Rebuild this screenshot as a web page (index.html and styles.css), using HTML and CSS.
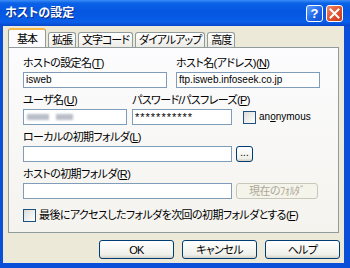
FILE: index.html
```html
<!DOCTYPE html>
<html lang="ja">
<head>
  <meta charset="UTF-8">
  <title>ホストの設定</title>
  <link rel="stylesheet" href="styles.css">
</head>
<body>

  <div class="window">
    <div class="titlebar">
      <span class="title">ホストの設定</span>
      <div class="caption-buttons">
        <span class="cap-btn cap-help">?</span>
        <span class="cap-btn cap-close">
          <svg width="11" height="11" viewBox="0 0 11 11"><path d="M1.5 1.5 L9.5 9.5 M9.5 1.5 L1.5 9.5" stroke="#fff" stroke-width="2" stroke-linecap="square"/></svg>
        </span>
      </div>
    </div>

    <div class="client">
      <div class="tabs">
        <div class="tab active">基本</div>
        <div class="tab">拡張</div>
        <div class="tab">文字コード</div>
        <div class="tab">ダイアルアップ</div>
        <div class="tab">高度</div>
      </div>

      <div class="panel">
        <div class="row">
          <div class="field w-144">
            <div class="label">ホストの設定名(<u>T</u>)</div>
            <div class="edit">isweb</div>
          </div>
          <div class="field w-144">
            <div class="label">ホスト名(アドレス)(<u>N</u>)</div>
            <div class="edit">ftp.isweb.infoseek.co.jp</div>
          </div>
        </div>

        <div class="row row-user">
          <div class="field w-104">
            <div class="label">ユーザ名(<u>U</u>)</div>
            <div class="edit">
              <span class="smudge smudge-a"></span>
              <span class="smudge smudge-b"></span>
            </div>
          </div>
          <div class="field w-100">
            <div class="label">パスワード/パスフレーズ(<u>P</u>)</div>
            <div class="edit password">***********</div>
          </div>
          <label class="check anon">
            <span class="box"></span>
            <span class="latin">an<u>o</u>nymous</span>
          </label>
        </div>

        <div class="field">
          <div class="label">ローカルの初期フォルダ(<u>L</u>)</div>
          <div class="line">
            <div class="edit w-209"></div>
            <span class="btn btn-dots">...</span>
          </div>
        </div>

        <div class="field">
          <div class="label">ホストの初期フォルダ(<u>R</u>)</div>
          <div class="line">
            <div class="edit w-209"></div>
            <span class="btn btn-current">現在のﾌｫﾙﾀﾞ</span>
          </div>
        </div>

        <label class="check last-folder">
          <span class="box"></span>
          <span>最後にアクセスしたフォルダを次回の初期フォルダとする(<u>F</u>)</span>
        </label>
      </div>

      <div class="actions">
        <span class="btn btn-action">OK</span>
        <span class="btn btn-action">キャンセル</span>
        <span class="btn btn-action">ヘルプ</span>
      </div>
    </div>
  </div>

</body>
</html>
```

FILE: styles.css
```css
/* Reset */
* {
  margin: 0;
  padding: 0;
  box-sizing: border-box;
}

body {
  width: 350px;
  height: 268px;
  overflow: hidden;
  font-family: "Liberation Sans", "Noto Sans CJK JP", sans-serif;
  font-size: 11px;
  letter-spacing: -0.6px;
  font-feature-settings: "palt";
  color: #000;
}

u {
  text-decoration: underline;
  text-underline-offset: 1px;
}

/* Window frame */
.window {
  width: 350px;
  height: 268px;
  display: flex;
  flex-direction: column;
  background: #0a4fd8;
}

.titlebar {
  height: 26px;
  display: flex;
  align-items: center;
  justify-content: space-between;
  padding: 0 7px 1px 5px;
  background: linear-gradient(to bottom, #3d8ef8 0%, #0b62e6 12%, #0556e2 45%, #0a5ee8 85%, #0646cc 100%);
}

.title {
  color: #fff;
  font-weight: bold;
  font-size: 12px;
  letter-spacing: 0;
  line-height: 14px;
  text-shadow: 1px 1px 0 #0b2a87;
}

.caption-buttons {
  display: flex;
  gap: 3px;
  margin-top: 2px;
}

.cap-btn {
  width: 17px;
  height: 17px;
  border: 1px solid #fff;
  border-radius: 3px;
  display: flex;
  align-items: center;
  justify-content: center;
  color: #fff;
  font-weight: bold;
  font-size: 13px;
  letter-spacing: 0;
  line-height: 1;
}

.cap-help {
  background: linear-gradient(135deg, #5aa0ff, #1d63e8 60%, #1350d2);
}

.cap-close {
  background: linear-gradient(135deg, #f08b68, #e0502c 55%, #c5391a);
}

/* Client area */
.client {
  flex: 1;
  margin: 0 6px 5px 3px;
  background: #ece9d8;
  display: flex;
  flex-direction: column;
}

/* Tabs */
.tabs {
  height: 22px;
  padding: 2px 0 0 5px;
  display: flex;
  align-items: flex-end;
}

.tab {
  height: 15px;
  margin: 0 2px 1px 0;
  padding: 0 3px;
  border: 1px solid #919b9c;
  border-bottom: none;
  border-radius: 3px 3px 0 0;
  background: linear-gradient(to bottom, #fff, #ecebe6);
  letter-spacing: -1px;
  line-height: 14px;
  white-space: nowrap;
}

.tab.active {
  height: 20px;
  margin-bottom: 0;
  padding: 2px 8px 0;
  border-top: 2px solid #f6b84b;
  background: #fcfcfe;
}

/* Tab page */
.panel {
  height: 186px;
  margin: -1px 5px 0 5px;
  padding: 8px 0 0 14px;
  border: 1px solid #919b9c;
  background: linear-gradient(to bottom, #fcfcfe, #f4f3ee);
  display: flex;
  flex-direction: column;
  gap: 5px;
}

.row {
  display: flex;
  gap: 9px;
}

.row-user {
  gap: 5px;
  align-items: flex-end;
}

.field {
  display: flex;
  flex-direction: column;
  gap: 2px;
}

.label {
  line-height: 14px;
  white-space: nowrap;
}

.w-144 { width: 144px; }
.w-104 { width: 104px; }
.w-100 { width: 100px; }
.w-209 { width: 209px; }

.edit {
  height: 16px;
  border: 1px solid #7f9db9;
  background: #fff;
  padding-left: 2px;
  font-size: 10px;
  letter-spacing: 0;
  line-height: 14px;
  white-space: nowrap;
  overflow: hidden;
  display: flex;
  align-items: center;
}

.password {
  font-size: 11px;
  letter-spacing: 1px;
}

/* Blurred user name */
.smudge {
  height: 6px;
  background: #b9bec8;
  filter: blur(1px);
}

.smudge-a {
  width: 22px;
  margin-left: 1px;
}

.smudge-b {
  width: 17px;
  margin-left: 7px;
}

.line {
  display: flex;
  gap: 4px;
}

/* Checkboxes */
.check {
  display: flex;
  align-items: center;
  gap: 3px;
  line-height: 14px;
  white-space: nowrap;
}

.box {
  width: 13px;
  height: 13px;
  border: 1px solid #1c5180;
  background: linear-gradient(135deg, #dcdcd7, #fff);
}

.anon {
  margin: 0 0 1px 6px;
}

.latin {
  font-size: 10px;
  letter-spacing: 0;
}

.last-folder {
  margin-top: 4px;
}

/* Buttons */
.btn {
  display: flex;
  align-items: center;
  justify-content: center;
  border: 1px solid #003c74;
  border-radius: 3px;
  background: linear-gradient(to bottom, #fff, #f0f0ea 80%, #d6d0c5);
  line-height: 14px;
  white-space: nowrap;
}

.btn-dots {
  width: 17px;
  height: 16px;
  font-size: 10px;
  letter-spacing: 0;
  padding-bottom: 3px;
}

.btn-current {
  width: 82px;
  height: 16px;
  border-color: #c9c7ba;
  background: #f5f4ea;
  color: #aca899;
}

.actions {
  display: flex;
  justify-content: flex-end;
  gap: 8px;
  padding: 7px 4px 0 0;
}

.btn-action {
  width: 75px;
  height: 19px;
}
```
